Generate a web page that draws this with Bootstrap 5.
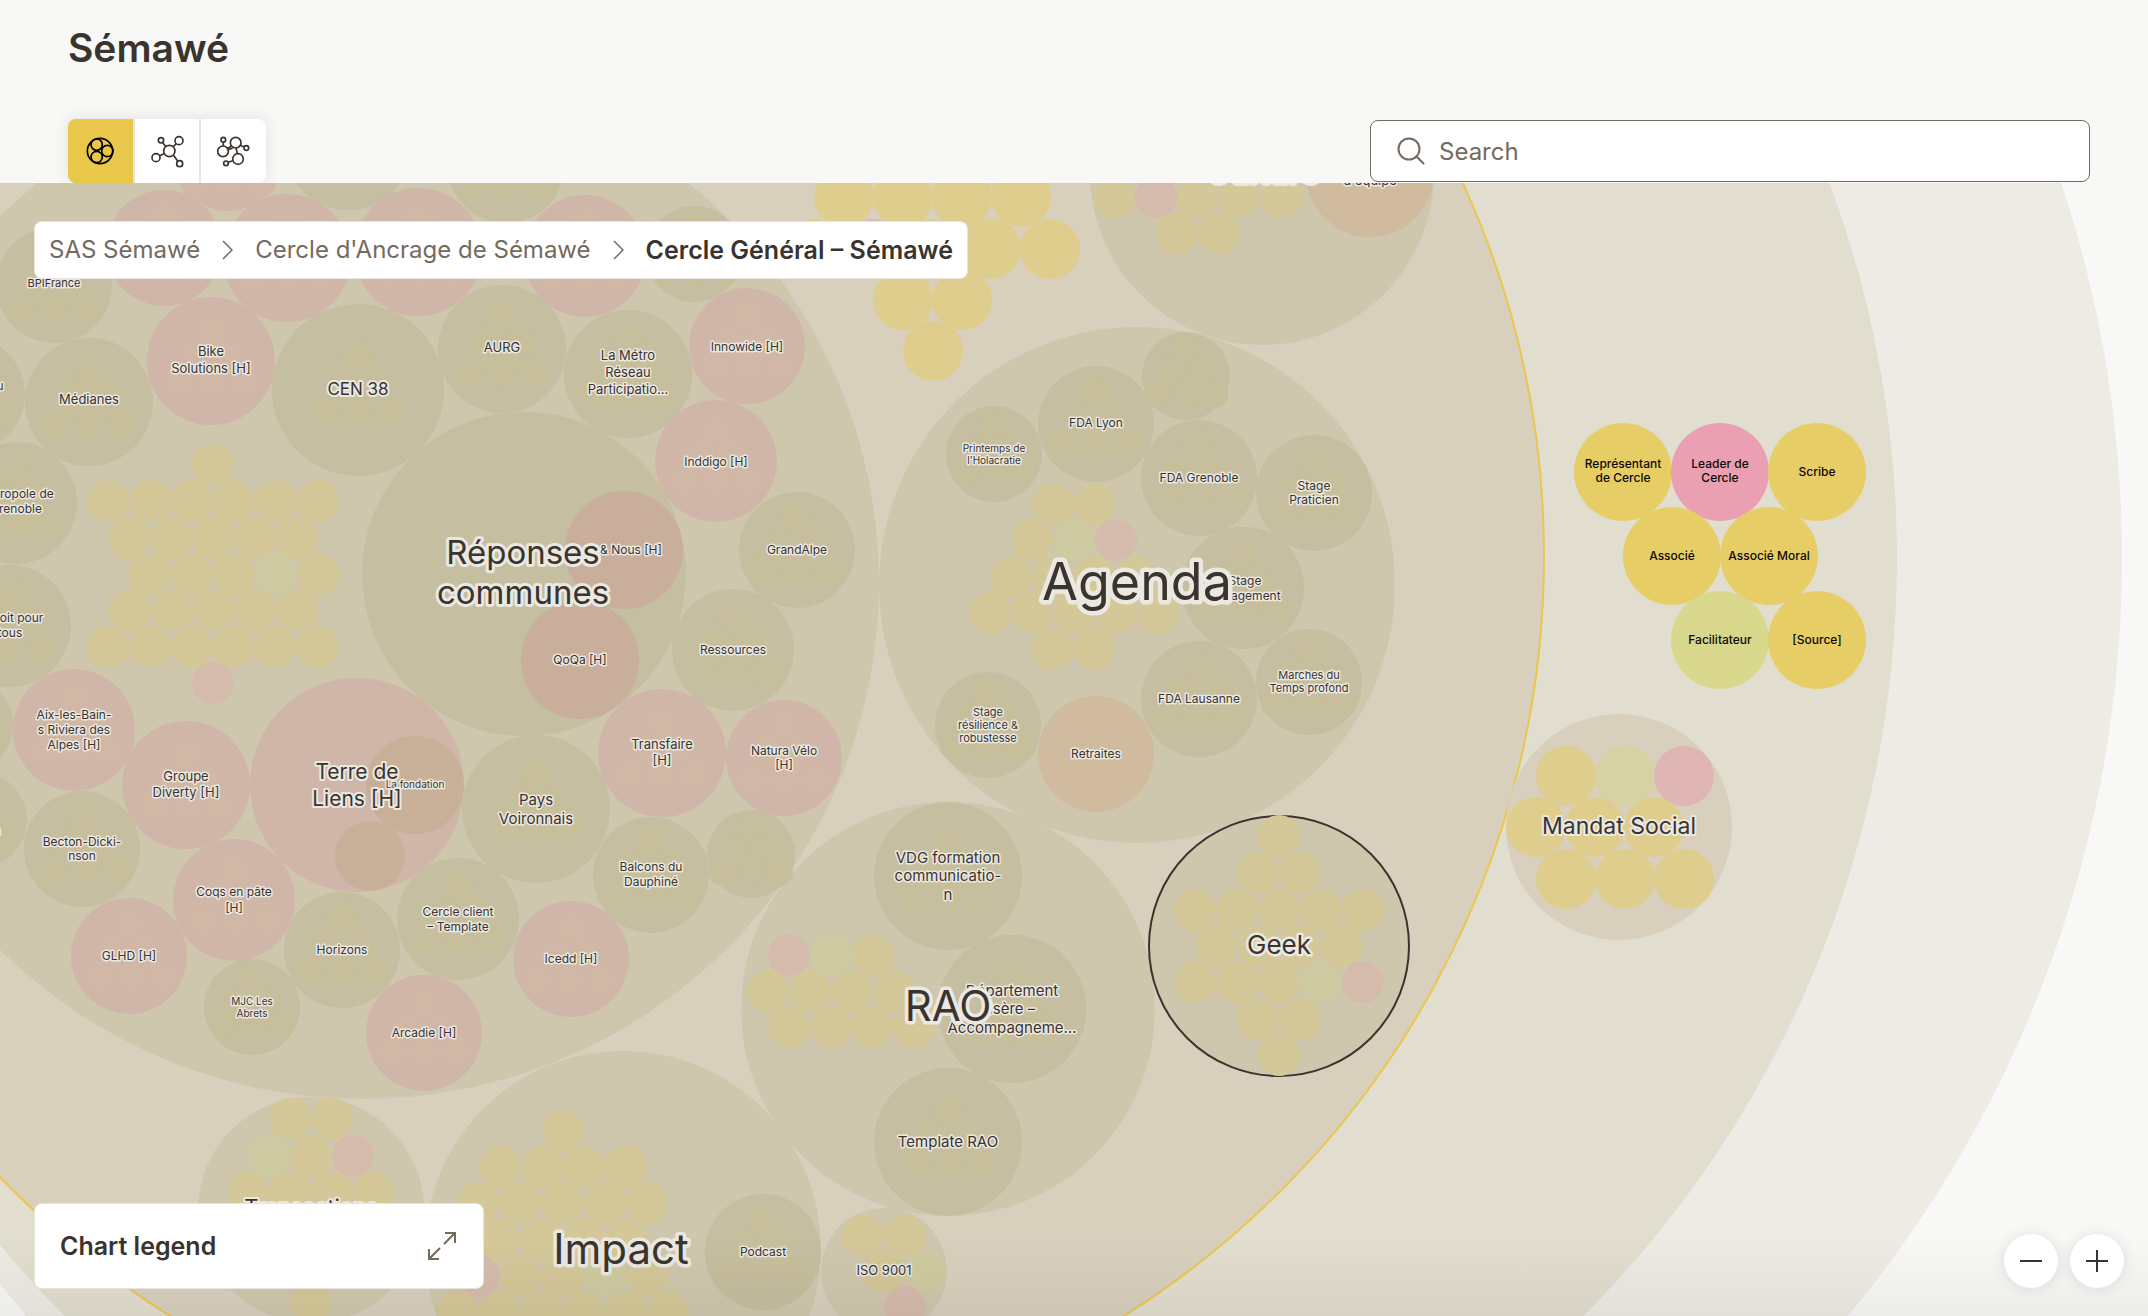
<!DOCTYPE html>
<html lang="fr">
<head>
<meta charset="utf-8">
<meta name="viewport" content="width=device-width, initial-scale=1">
<title>Sémawé</title>
<link href="https://cdn.jsdelivr.net/npm/bootstrap@5.3.0/dist/css/bootstrap.min.css" rel="stylesheet">
<style>
:root{--ink:#3a342f;--muted-ink:#746a5d;--line:#e8e5de;--gold:#e9c74b}
body{font-family:Inter,"Liberation Sans",sans-serif;background:#f8f8f6;color:var(--ink);font-size:24px;line-height:32px}
.page-head{padding:24px 58px 0 68px}
.page-title{font-size:39px;line-height:48px;font-weight:600;margin:0 0 47px}
.view-switch{width:198px;background:var(--line);gap:2px;border-radius:8px;overflow:hidden;box-shadow:0 0 16px rgba(60,50,40,.12)}
.view-btn{flex:1 1 0;height:64px;background:#fff;color:var(--ink);border:0;border-radius:0;padding:0}
.view-btn.active{background:var(--gold);color:#000}
.search-wrap{width:720px}
.search-wrap svg{left:27px;top:17px;color:var(--muted-ink)}
.search-field{height:62px;padding:0 20px 0 68px;font-size:24px;border:1px solid var(--muted-ink);border-radius:8px;color:var(--ink)}
.search-field::placeholder{color:var(--muted-ink)}
.chart-area{min-height:0}
.chart-area>svg{position:absolute;inset:0;width:100%;height:100%}
.chart-area::after{content:"";position:absolute;inset:auto 0 0 0;height:80px;background:linear-gradient(transparent,rgba(60,50,40,.06));pointer-events:none}
.panel{background:#fff;border:1px solid var(--line);border-radius:8px}
.trail{left:34px;top:38px;padding:12px 14px}
.trail ol{gap:22px;font-size:24px}
.trail a{color:var(--muted-ink);text-decoration:none}
.trail .current{font-size:25px;font-weight:600;color:var(--ink)}
.legend-btn{left:34px;bottom:27px;width:450px;max-width:90%;height:86px;padding:0 26px 0 25px;font-size:25px;font-weight:600;color:var(--ink);z-index:2}
.legend-btn svg{color:var(--muted-ink)}
.zoom-tools{right:24px;bottom:28px;gap:12px;z-index:2}
.round-btn{width:54px;height:54px;border:0;background:#fff;color:var(--ink);box-shadow:0 0 14px rgba(60,50,40,.12);padding:0}
.tag{font-family:Inter,"Liberation Sans",sans-serif;text-anchor:middle;fill:var(--ink)}
.tag-strong{fill:#0c0a08;font-weight:500}
.halo{stroke:#ebe8e2;paint-order:stroke;stroke-linejoin:round}
</style>
</head>
<body class="vh-100 d-flex flex-column overflow-hidden">
<header class="page-head">
  <h1 class="page-title">Sémawé</h1>
  <div class="d-flex justify-content-between align-items-center">
    <div class="view-switch d-flex" role="group" aria-label="Chart view">
      <button type="button" class="view-btn active d-flex align-items-center justify-content-center" aria-label="Circles">
        <svg width="28" height="28" viewBox="79 82 84 84" fill="none" stroke="currentColor" stroke-width="5"><circle cx="121" cy="124" r="38"/><circle cx="111" cy="105" r="17"/><circle cx="143" cy="124" r="17"/><circle cx="111" cy="142" r="17"/></svg>
      </button>
      <button type="button" class="view-btn d-flex align-items-center justify-content-center" aria-label="Tree">
        <svg width="35" height="35" viewBox="269 71 105 105" fill="none" stroke="currentColor" stroke-width="5"><circle cx="327" cy="122" r="17"/><circle cx="356" cy="91" r="12"/><circle cx="302" cy="90" r="8"/><circle cx="287" cy="142" r="12"/><circle cx="358" cy="160" r="9"/><path d="M339 109l9-9M316 108l-9-11M311 130l-13 6M339 134l13 18"/></svg>
      </button>
      <button type="button" class="view-btn d-flex align-items-center justify-content-center" aria-label="Network">
        <svg width="35" height="35" viewBox="468 71 105 105" fill="none" stroke="currentColor" stroke-width="5"><circle cx="527" cy="97" r="16"/><circle cx="489" cy="123" r="16"/><circle cx="534" cy="146" r="16"/><circle cx="490" cy="88" r="7"/><circle cx="559" cy="113" r="7"/><circle cx="498" cy="159" r="7"/><path d="M490 95v12M541 105l11 5M514 107l-12 8M505 118l13-5M528 113l4 17M518 151l-13 5"/></svg>
      </button>
    </div>
    <div class="search-wrap position-relative">
      <label for="chartSearch" class="visually-hidden">Search</label>
      <svg class="position-absolute" width="28" height="28" viewBox="0 0 28 28" fill="none" stroke="currentColor" stroke-width="2" stroke-linecap="round"><circle cx="12" cy="12" r="10.500"/><path d="M19.500 19.500L26.500 26.500"/></svg>
      <input id="chartSearch" type="search" class="search-field form-control" placeholder="Search">
    </div>
  </div>
</header>

<main class="chart-area position-relative flex-grow-1 overflow-hidden">
  <svg id="chart" viewBox="0 183 2148 1133" preserveAspectRatio="xMidYMid slice" role="img" aria-label="Cercles de Sémawé"></svg>

  <nav class="trail panel position-absolute" aria-label="breadcrumb">
    <ol class="list-unstyled d-flex align-items-center m-0">
      <li><a href="#">SAS Sémawé</a></li>
      <li class="d-flex" aria-hidden="true"><svg width="11" height="20" viewBox="0 0 11 20" fill="none" stroke="#746a5d" stroke-width="1.500"><path d="M1 1l9 9-9 9"/></svg></li>
      <li><a href="#">Cercle d'Ancrage de Sémawé</a></li>
      <li class="d-flex" aria-hidden="true"><svg width="11" height="20" viewBox="0 0 11 20" fill="none" stroke="#746a5d" stroke-width="1.500"><path d="M1 1l9 9-9 9"/></svg></li>
      <li class="current" aria-current="page">Cercle Général – Sémawé</li>
    </ol>
  </nav>

  <button type="button" class="legend-btn panel position-absolute d-flex align-items-center justify-content-between">
    Chart legend
    <svg width="30" height="30" viewBox="0 0 30 30" fill="none" stroke="currentColor" stroke-width="2"><path d="M17 13L28 2M18 2h10v10M13 17L2 28M2 18v10h10"/></svg>
  </button>

  <div class="zoom-tools position-absolute d-flex">
    <button type="button" class="round-btn rounded-circle d-flex align-items-center justify-content-center" aria-label="Zoom out"><svg width="22" height="22" viewBox="0 0 22 22" stroke="currentColor" stroke-width="2"><path d="M0 11h22"/></svg></button>
    <button type="button" class="round-btn rounded-circle d-flex align-items-center justify-content-center" aria-label="Zoom in"><svg width="22" height="22" viewBox="0 0 22 22" stroke="currentColor" stroke-width="2"><path d="M0 11h22M11 0v22"/></svg></button>
  </div>
</main>

<script>
const NS = 'http://www.w3.org/2000/svg', chart = document.getElementById('chart');
function add(name, attrs, text) {
  const el = document.createElementNS(NS, name);
  for (const k in attrs) el.setAttribute(k, attrs[k]);
  if (text) el.textContent = text;
  chart.appendChild(el);
}
const dot = (cx, cy, r, fill, extra) => add('circle', Object.assign({cx, cy, r, fill}, extra));

// Nested organisation levels, outermost first
dot(937, 558, 1185, '#edebe4');
dot(824, 558, 1073, '#e1decf');
dot(647, 556, 897, '#d8d0bd', {stroke: '#eac74c', 'stroke-width': 2});

// Circles of the third level
[[363,583,516],[1137,585,258],[1262,173,172],[948,1009,207],[623,1249,198],[311,1210,113],[884,1271,63]]
  .forEach(c => dot(...c, '#cec7ad'));
dot(1279, 946, 130, '#cec7ad', {stroke: '#3a342f', 'stroke-width': 2});
dot(1619, 827, 113, '#d8d0bd');

// Sub-circles: [x, y, r]
const olive = [[54,285,58],[348,146,64],[506,164,59],[694,254,48],[89,402,64],[358,390,86],[502,349,64],[628,374,64],[524,574,162],
 [797,550,58],[733,650,61],[536,809,74],[651,875,58],[751,854,44],[458,919,61],[82,849,58],[342,950,58],[252,1007,48],
 [-33,394,58],[16,503,61],[10,626,61],[-35,725,48],[-21,820,48],
 [1096,424,58],[1186,376,44],[994,454,48],[1199,478,58],[1314,493,58],[1243,588,61],[1309,682,53],[1199,699,58],[988,725,53],
 [948,876,74],[1012,1009,74],[948,1142,74],[763,1252,58]];
const rose = [[164,248,58],[228,161,50],[287,258,64],[418,252,64],[585,256,61],[211,361,64],[747,346,58],[716,461,61],[662,753,64],
 [784,758,58],[571,959,58],[424,1033,58],[357,785,107],[74,730,61],[186,785,64],[234,900,61],[129,956,58]];
// faint honeycomb of roles inside a sub-circle
function comb(cx, cy, R, fill) {
  const s = R < 50 ? 14 : 16;
  if (R > 90) return;
  [[-1,-.4],[1,-.4],[0,-2],[-2,1.3],[0,1.3],[2,1.3]].forEach(p => dot(cx + p[0]*s, cy + p[1]*s, s, fill));
}
olive.forEach(c => { dot(...c, '#c5bea0'); comb(...c, '#c7be9c'); });
rose.forEach(c => { dot(...c, '#d0b6a8'); comb(...c, '#d1b7a5'); });
[[624,550,59],[580,660,59]].forEach(c => dot(...c, '#c8ae9b'));
[[415,785,49],[370,856,35]].forEach(c => dot(...c, '#c8af97'));
[[1096,754,58],[1370,173,64]].forEach(c => dot(...c, '#d1bb9e'));

// Rows of roles: radius, palette, [y, first x, step, kinds]
function rows(r, pal, list) {
  list.forEach(([y, x, step, kinds]) => [...kinds].forEach((k, i) => { if (k !== ' ') dot(x + i*step, y, r, pal[k]); }));
}
const dim = {y:'#d4c798', g:'#cecaa1', p:'#d5bbac'};
const mid = {y:'#dfcd8e', g:'#d6d2a3', p:'#e0b5b5'};
const full = {y:'#e7cd65', g:'#d8d78c', p:'#eb9fb2'};
rows(21, dim, [
 [465,213,42,'y'],[501,108,42,'yyyyyy'],[538,129,42,'yyyyy'],[574,150,42,'yyygy'],[610,129,42,'yyyyy'],[647,108,42,'yyyyyy'],[683,213,42,'p'],
 [197,1114,42,'ypyyy'],[233,1177,42,'yy'],
 [504,1053,42,'yy'],[540,1032,42,'ygp'],[577,1011,42,'yyyy'],[613,990,42,'yyyyy'],[649,1053,42,'yy'],
 [955,789,42,'pgy'],[991,768,42,'yyyy'],[1027,789,42,'yyyy'],
 [836,1279,42,'y'],[873,1258,42,'yy'],[910,1195,42,'yyyyy'],[946,1216,42,'yyyy'],[982,1195,42,'yyygp'],[1019,1258,42,'yy'],[1055,1279,42,'y'],
 [1119,290,42,'yy'],[1156,269,42,'gyp'],[1192,248,42,'yyyy'],[1302,311,42,'y'],
 [1131,563,42,'y'],[1167,500,42,'yyyy'],[1203,479,42,'yyyyy'],[1240,500,42,'yyyy'],[1276,479,42,'pyygy'],[1312,458,42,'yyyyyy'],
 [1235,863,42,'yy'],[1271,884,42,'yg'],[1307,905,42,'p']]);
rows(30, mid, [[197,844,59,'yyyy'],[249,814,59,'ypyyy'],[300,903,59,'yy'],[351,933,59,'y'],
 [776,1566,59,'ygp'],[827,1536,59,'yyy'],[879,1566,59,'yyy']]);
rows(49, full, [[472,1623,97,'ypy'],[556,1672,97,'yy'],[640,1720,97,'gy']]);
// these sub-circles lie over the neighbouring roles
dot(1243, 588, 61, '#c5bea0'); comb(1243, 588, 61, '#c7be9c');
dot(1012, 1009, 74, '#c5bea0'); comb(1012, 1009, 74, '#c7be9c');

// Labels: [x, size, baseline, text, baseline, text, ...]
const labels = [
 [252,10,1005,'MJC Les',1017,'Abrets'],[415,10,788,'La fondation'],[994,10,452,'Printemps de',464,"l'Holacratie"],
 [54,11,287,'BPIFrance'],[1309,11,679,'Marches du',692,'Temps profond'],[988,11,716,'Stage',729,'résilience &',742,'robustesse'],
 [747,12,351,'Innowide [H]'],[716,12,466,'Inddigo [H]'],[797,12,554,'GrandAlpe'],[733,12,654,'Ressources'],[631,12,554,'& Nous [H]'],
 [580,12,664,'QoQa [H]'],[784,12,755,'Natura Vélo',769,'[H]'],[651,12,871,'Balcons du',886,'Dauphiné'],
 [458,12,916,'Cercle client',931,'– Template'],[571,12,963,'Icedd [H]'],[424,12,1037,'Arcadie [H]'],[342,12,954,'Horizons'],
 [129,12,960,'GLHD [H]'],[234,12,896,'Coqs en pâte',912,'[H]'],[82,12,846,'Becton-Dicki-',860,'nson'],
 [74,12,719,'Aix-les-Bain-',734,'s Riviera des',749,'Alpes [H]'],[16,12,498,'Métropole de',513,'Grenoble'],
 [10,12,622,'Un toit pour',637,'tous'],[0,12,390,'u'],[-3,12,835,'n'],
 [1096,12,427,'FDA Lyon'],[1199,12,482,'FDA Grenoble'],[1314,12,490,'Stage',504,'Praticien'],[1245,12,585,'Stage',600,'Engagement'],
 [1199,12,703,'FDA Lausanne'],[1096,12,758,'Retraites'],[763,12,1256,'Podcast'],[1370,13,185,"d'équipe"],
 [211,13,356,'Bike',373,'Solutions [H]'],[89,13,404,'Médianes'],[502,13,352,'AURG'],[628,13,360,'La Métro',377,'Réseau',394,'Participatio…'],
 [662,13,749,'Transfaire',765,'[H]'],[186,13,781,'Groupe',797,'Diverty [H]'],[884,13,1275,'ISO 9001'],
 [536,15,805,'Pays',824,'Voironnais'],[948,15,863,'VDG formation',881,'communicatio-',900,'n'],
 [1012,15,996,'Département',1014,'Isère –',1033,'Accompagneme…'],[948,15,1147,'Template RAO'],
 [358,17,395,'CEN 38'],[357,21,779,'Terre de',806,'Liens [H]'],[311,22,1215,'Transactions'],[1619,23,834,'Mandat Social'],
 [1279,26,954,'Geek'],[523,33,564,'Réponses',604,'communes'],[1263,33,183,'Culture'],[948,42,1021,'RAO'],[621,42,1264,'Impact'],[1137,52,600,'Agenda']];
const write = (l, cls) => { for (let i = 2; i < l.length; i += 2)
  add('text', {x: l[0], y: l[i], 'font-size': l[1], class: cls, 'stroke-width': cls === 'tag halo' ? Math.round(1 + l[1]*.15) : 0}, l[i+1]); };
labels.forEach(l => write(l, 'tag halo'));
[[1623,12,468,'Représentant',482,'de Cercle'],[1720,12,468,'Leader de',482,'Cercle'],[1817,12,476,'Scribe'],
 [1672,12,560,'Associé'],[1769,12,560,'Associé Moral'],[1720,12,644,'Facilitateur'],[1817,12,644,'[Source]']].forEach(l => write(l, 'tag tag-strong'));
</script>
<script src="https://cdn.jsdelivr.net/npm/bootstrap@5.3.0/dist/js/bootstrap.bundle.min.js"></script>
</body>
</html>
